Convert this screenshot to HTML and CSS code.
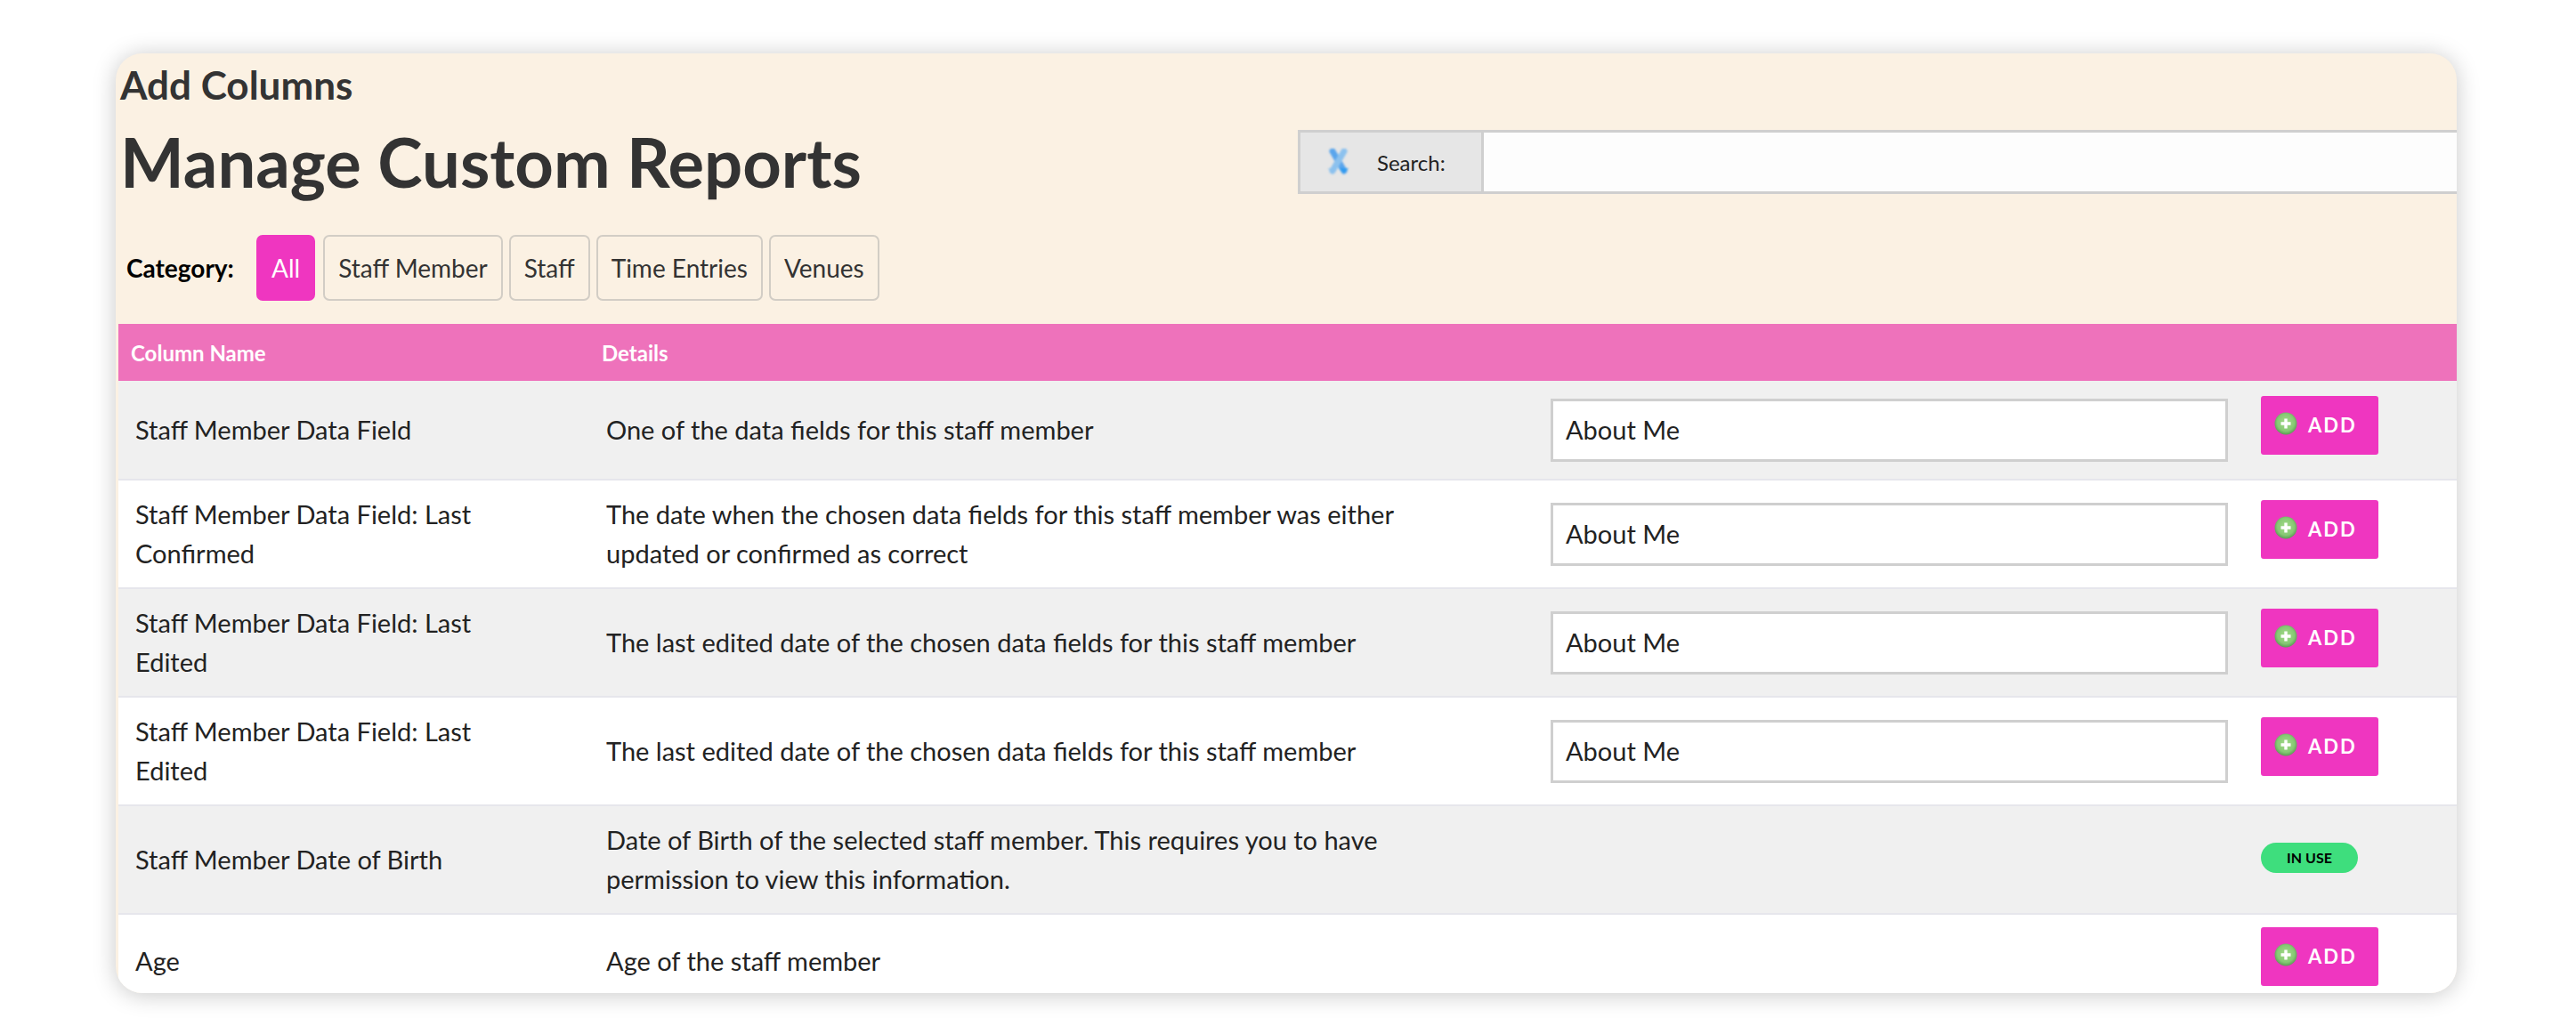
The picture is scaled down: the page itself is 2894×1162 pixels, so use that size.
FILE: index.html
```html
<!DOCTYPE html>
<html lang="en">
<head>
<meta charset="utf-8">
<title>Add Columns</title>
<link rel="stylesheet" href="styles.css">
</head>
<body>
<svg class="defs" width="0" height="0" aria-hidden="true">
  <defs>
    <radialGradient id="greenball" cx="50%" cy="45%" r="55%">
      <stop offset="0" stop-color="#a6dc8c"/>
      <stop offset="0.7" stop-color="#86c873"/>
      <stop offset="1" stop-color="#5b9a55"/>
    </radialGradient>
    <symbol id="plus" viewBox="0 0 26 26">
      <circle cx="13" cy="13" r="12.5" fill="url(#greenball)"/>
      <path d="M13 7.5v11M7.5 13h11" stroke="#fff" stroke-width="3.4"/>
    </symbol>
  </defs>
</svg>
<main class="panel">
  <h2 class="subtitle">Add Columns</h2>
  <div class="title-row">
    <h1 class="title">Manage Custom Reports</h1>
    <div class="search">
      <label class="search-label" for="q">
        <svg class="search-icon" width="27" height="30" viewBox="0 0 27 30">
          <path d="M7 3 20 25" stroke="#5aa5ec" stroke-width="7" stroke-linecap="round" fill="none"/>
          <path d="M20 3 7 25" stroke="#8cc1ee" stroke-width="7" stroke-linecap="round" fill="none"/>
          <path d="M14 22h11l-5.500 6z" fill="#2f9bf0"/>
          <path d="M2 22h9l-4.500 6z" fill="#8cc1ee"/>
        </svg>
        <span>Search:</span>
      </label>
      <input class="search-input" id="q" type="text">
    </div>
  </div>
  <div class="cats">
    <span class="cats-label">Category:</span>
    <a class="cat cat-on">All</a>
    <a class="cat">Staff Member</a>
    <a class="cat">Staff</a>
    <a class="cat">Time Entries</a>
    <a class="cat">Venues</a>
  </div>
  <table class="grid">
    <colgroup>
      <col class="c1"><col class="c2"><col class="c3"><col class="c4">
    </colgroup>
    <thead>
      <tr><th>Column Name</th><th>Details</th><th></th><th></th></tr>
    </thead>
    <tbody>
      <tr class="r-s odd">
        <td>Staff Member Data Field</td>
        <td>One of the data fields for this staff member</td>
        <td><div class="fld">About Me</div></td>
        <td><a class="add"><svg class="plus" width="26" height="26"><use href="#plus"/></svg>ADD</a></td>
      </tr>
      <tr>
        <td>Staff Member Data Field: Last<br>Confirmed</td>
        <td>The date when the chosen data fields for this staff member was either<br>updated or confirmed as correct</td>
        <td><div class="fld">About Me</div></td>
        <td><a class="add"><svg class="plus" width="26" height="26"><use href="#plus"/></svg>ADD</a></td>
      </tr>
      <tr class="odd">
        <td>Staff Member Data Field: Last<br>Edited</td>
        <td>The last edited date of the chosen data fields for this staff member</td>
        <td><div class="fld">About Me</div></td>
        <td><a class="add"><svg class="plus" width="26" height="26"><use href="#plus"/></svg>ADD</a></td>
      </tr>
      <tr>
        <td>Staff Member Data Field: Last<br>Edited</td>
        <td>The last edited date of the chosen data fields for this staff member</td>
        <td><div class="fld">About Me</div></td>
        <td><a class="add"><svg class="plus" width="26" height="26"><use href="#plus"/></svg>ADD</a></td>
      </tr>
      <tr class="odd">
        <td>Staff Member Date of Birth</td>
        <td>Date of Birth of the selected staff member. This requires you to have<br>permission to view this information.</td>
        <td></td>
        <td><span class="pill">IN USE</span></td>
      </tr>
      <tr class="r-l">
        <td>Age</td>
        <td>Age of the staff member</td>
        <td></td>
        <td><a class="add"><svg class="plus" width="26" height="26"><use href="#plus"/></svg>ADD</a></td>
      </tr>
    </tbody>
  </table>
</main>
</body>
</html>
```
FILE: styles.css
```css
* { box-sizing: border-box; }
html, body { margin: 0; background: #fff; }
body {
  height: 1162px;
  padding: 60px 134px 0 130px;
  overflow: hidden;
  font-family: "Lato", "Liberation Sans", sans-serif;
  color: #222;
}
.defs { position: absolute; }
.panel {
  height: 1056px;
  background: #fbf1e3;
  border-radius: 30px;
  box-shadow: 0 2px 26px rgba(0, 0, 0, 0.22);
  overflow: hidden;
  padding-left: 3px;
}
.subtitle {
  margin: 0;
  padding: 12px 0 0 2px;
  height: 66px;
  font-size: 44px;
  line-height: 46px;
  font-weight: 700;
  color: #333;
}
.title-row {
  display: flex;
  justify-content: space-between;
  align-items: flex-start;
  height: 120px;
  padding-top: 20px;
}
.title {
  margin: 0;
  padding-left: 2px;
  font-size: 76px;
  line-height: 72px;
  font-weight: 700;
  color: #333;
}
.search {
  display: flex;
  width: 1302px;
  height: 72px;
  border: 3px solid #cfcfcf;
  border-right: 0;
}
.search-label {
  display: flex;
  align-items: center;
  gap: 30px;
  width: 206px;
  padding-left: 29px;
  background: #e6e6e6;
  border-right: 3px solid #cfcfcf;
  font-size: 24px;
}
.search-icon { filter: blur(0.8px); }
.search-input {
  flex: 1;
  border: 0;
  padding: 0;
  background: #fdfdfd;
}
.cats {
  display: flex;
  align-items: center;
  height: 74px;
  padding-left: 9px;
  font-size: 28px;
  margin-top: 18px;
}
.cats-label { color: #000; font-weight: 700; width: 146px; }
.cat {
  display: flex;
  align-items: center;
  justify-content: center;
  height: 74px;
  padding: 0 15px;
  margin-right: 7px;
  border: 2px solid #d2cdc5;
  border-radius: 7px;
  color: #333;
  white-space: nowrap;
}
.cat-on {
  background: #ef36c0;
  border-color: #ef36c0;
  color: #fff;
  margin-right: 9px;
}
.grid {
  width: 2627px;
  margin-top: 26px;
  border-collapse: collapse;
  table-layout: fixed;
}
.c1 { width: 529px; }
.c2 { width: 1071px; }
.c3 { width: 797px; }
.c4 { width: 230px; }
.grid th {
  height: 64px;
  padding: 0 0 0 14px;
  background: #ee72bb;
  color: #fff;
  font-size: 24px;
  font-weight: 700;
  text-align: left;
}
.grid td {
  height: 122px;
  padding: 0 0 0 19px;
  background: #fff;
  border-bottom: 2px solid #e6e6ec;
  font-size: 29px;
  line-height: 44px;
  vertical-align: middle;
}
.grid td:nth-child(3) { padding: 0 0 0 9px; }
.grid td:nth-child(4) { padding: 0 0 0 10px; }
.grid .odd td { background: #f0f0f0; }
.grid .r-s td { height: 111px; }
.grid .r-l td { height: 104px; border-bottom: 0; }
.fld {
  width: 761px;
  height: 71px;
  padding-left: 14px;
  display: flex;
  align-items: center;
  background: #fff;
  border: 3px solid #cfcfcf;
}
.add {
  display: flex;
  align-items: center;
  width: 132px;
  height: 66px;
  margin-bottom: 10px;
  padding-left: 15px;
  background: #ef36c0;
  border-radius: 3px;
  color: #fff;
  font-size: 22px;
  font-weight: 700;
  letter-spacing: 2px;
  line-height: 1;
}
.plus { margin-right: 12px; margin-top: -4px; }
.pill {
  display: flex;
  align-items: center;
  justify-content: center;
  width: 109px;
  height: 34px;
  margin-top: -4px;
  background: #3ede7d;
  border-radius: 17px;
  color: #000;
  font-size: 16px;
  font-weight: 700;
  line-height: 1;
}
```
